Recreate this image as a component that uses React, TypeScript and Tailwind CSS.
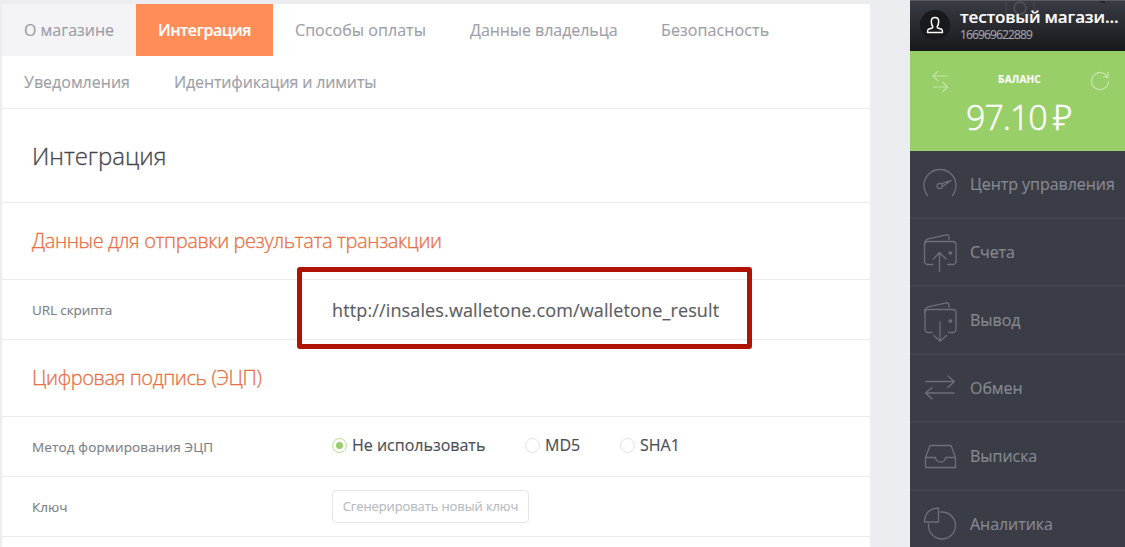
import type { ReactNode } from "react";

const MenuIcon = ({ children }: { children: ReactNode }) => (
  <svg width="40" height="44" viewBox="0 0 40 44" fill="none" stroke="#6c6f78" strokeWidth="1.3" strokeLinecap="round" strokeLinejoin="round" className="shrink-0">
    {children}
  </svg>
);

const walletBody = (
  <>
    <path d="M4.5 14.5C4.5 10.500 6 9.500 8 8.800L26.500 4.800Q28.800 4.400 29 7V9.300" />
    <circle cx="30.300" cy="23" r="1.400" fill="#6c6f78" strokeWidth="1" />
  </>
);

const menu = [
  {
    label: "Центр управления",
    icon: (
      <MenuIcon>
        <path d="M7.500 33.500A16 16 0 1 1 32.500 33.500" />
        <circle cx="19.800" cy="24" r="2.700" />
        <path d="M21.300 21.700L31 18.500L22.500 24.500" />
      </MenuIcon>
    ),
  },
  {
    label: "Счета",
    icon: (
      <MenuIcon>
        {walletBody}
        <path d="M13 34.500H8Q4.500 34.500 4.500 31V14.500Q4.500 11.500 8 11.500H32.500Q36 11.500 36 15V31Q36 34.500 32.500 34.500H27.500M19.500 41.500V22.500M13.500 29L19.500 22.500L26 29" />
      </MenuIcon>
    ),
  },
  {
    label: "Вывод",
    icon: (
      <MenuIcon>
        {walletBody}
        <path d="M12 34.500H8.500Q5 34.500 5 31V14.500Q5 11.500 8.500 11.500H32.500Q36 11.500 36 15V31Q36 34.500 32.500 34.500H28.500M20 24V43M14 37.500L20 43.300L26.500 37.500" />
      </MenuIcon>
    ),
  },
  {
    label: "Обмен",
    icon: (
      <MenuIcon>
        <path d="M6 15.500H34M28 10L34.300 15.500L28 21.500M34 27H5.500M12 21.500L5.500 27L12 33" />
      </MenuIcon>
    ),
  },
  {
    label: "Выписка",
    icon: (
      <MenuIcon>
        <path d="M5.500 33.500V23.500L10 11.500H31L35.500 23.500V33.500ZM5.500 23.500H15.500Q16 28 20.500 28T25.500 23.500H35.500" />
      </MenuIcon>
    ),
  },
  {
    label: "Аналитика",
    icon: (
      <MenuIcon>
        <path d="M18.500 6V20H4.500C4.500 11.500 10 6 18.500 6ZM20.500 10H22A13.500 13.500 0 1 1 8.500 23.500V22" />
      </MenuIcon>
    ),
  },
];

const tabRows = [
  [
    { label: "О магазине", style: "w-[134px] bg-[#f4f4f6] text-[#9b9da6]" },
    { label: "Интеграция", style: "w-[137px] bg-[#ff8d58] font-semibold tracking-[-0.45px] text-white" },
    { label: "Способы оплаты", style: "w-[175px] text-[#9ea0a9] tracking-[0.05px]" },
    { label: "Данные владельца", style: "w-[191px] text-[#9ea0a9] tracking-[-0.06px]" },
    { label: "Безопасность", style: "w-[153px] text-[#9ea0a9] tracking-[0.1px]" },
  ],
  [
    { label: "Уведомления", style: "w-[150px] text-[#9ea0a9]" },
    { label: "Идентификация и лимиты", style: "w-[247px] text-[#9ea0a9] tracking-[-0.14px]" },
  ],
];

function Radio({ label, checked, className }: { label: string; checked?: boolean; className: string }) {
  return (
    <label className={`flex items-center gap-[5px] ${className}`}>
      <span className={`flex size-[15px] items-center justify-center rounded-full border ${checked ? "border-[#b5dc93]" : "border-[#e2e2e5]"}`}>
        {checked && <span className="size-[7px] rounded-full bg-[#97ce67]" />}
      </span>
      <span>{label}</span>
    </label>
  );
}

function Row({ label, tracking = "", children }: { label: string; tracking?: string; children: ReactNode }) {
  return (
    <div className="flex h-[60px] items-center border-b border-[#ececee] pl-[30px]">
      <div className={`w-[300px] shrink-0 pt-[2px] text-[13.5px] text-[#7c7f88] ${tracking}`}>{label}</div>
      {children}
    </div>
  );
}

function Section({ children }: { children: ReactNode }) {
  return (
    <h2 className="flex h-[77px] items-center border-b border-[#ececee] pl-[30px] text-[20px] font-light tracking-[-0.38px] text-[#e86f43] [-webkit-text-stroke:0.3px]">
      {children}
    </h2>
  );
}

export default function App() {
  return (
    <div className="flex h-[547px] w-[1125px] overflow-hidden bg-[#ecedf1] font-['Open_Sans','Noto_Sans',sans-serif] whitespace-nowrap [-webkit-text-stroke:0.15px]">
      <main className="mt-1 ml-[2px] w-[868px] bg-white">
        <nav className="h-[105px] border-b border-[#ececee] text-[16px]">
          {tabRows.map((row, i) => (
            <div key={i} className="flex">
              {row.map((tab) => (
                <a key={tab.label} className={`flex h-[52px] items-center pl-[22px] ${tab.style}`}>{tab.label}</a>
              ))}
            </div>
          ))}
        </nav>
        <h1 className="flex h-[94px] items-center border-b border-[#ececee] pl-[30px] text-[24px] font-light text-[#44464f] [-webkit-text-stroke:0.3px]">Интеграция</h1>
        <Section>Данные для отправки результата транзакции</Section>
        <Row label="URL скрипта" tracking="tracking-[-0.1px]">
          <div className="relative pt-[2px] text-[18px] tracking-[0.13px] text-[#5c5d64]">
            http://insales.walletone.com/walletone_result
            <span className="absolute top-1/2 -left-[35px] h-[82px] w-[455px] -translate-y-[43px] rounded-[3px] border-5 border-[#b01204]" />
          </div>
        </Row>
        <Section>Цифровая подпись (ЭЦП)</Section>
        <Row label="Метод формирования ЭЦП" tracking="tracking-[0.15px]">
          <div className="flex pb-[3px] text-[16px] text-[#4c4e56]">
            <Radio label="Не использовать" checked className="w-[193px]" />
            <Radio label="MD5" className="w-[95px]" />
            <Radio label="SHA1" className="w-[95px]" />
          </div>
        </Row>
        <Row label="Ключ">
          <button className="h-[33px] w-[197px] rounded-[4px] border border-[#e4e5e8] text-[13px] tracking-[-0.12px] text-[#b8bac1]">Сгенерировать новый ключ</button>
        </Row>
      </main>

      <aside className="ml-10 w-[215px] bg-[#3b3d46]">
        <header className="relative flex h-[51px] overflow-hidden border-t border-[#5a5c64] bg-linear-to-b from-[#3a3c44] to-[#18191c] pt-[9px] pl-[10px]">
          <svg width="100" height="17" viewBox="0 0 100 17" fill="none" className="absolute top-0 left-[95px]">
            <path d="M1 0V14H29V0" stroke="#484a52" />
            <circle cx="15" cy="7" r="6" stroke="#50525a" strokeWidth="1.5" />
            <path d="M94 0Q100 5 106 0Z" fill="#25262b" />
          </svg>
          <span className="relative flex size-[30px] shrink-0 items-center justify-center rounded-full bg-[#18191d]">
            <svg width="18" height="18" viewBox="0 0 18 18" fill="none" stroke="#fff" strokeWidth="1.500" strokeLinejoin="round">
              <path d="M6.800 10.500C5.500 9 5.300 7 5.300 5.200Q5.500 1.500 9 1.500T12.700 5.200C12.700 7 12.500 9 11.200 10.500Q11 12 12.500 12.300L15.500 13.200Q16.500 13.700 16.500 16.500H1.500Q1.500 13.700 2.500 13.200L5.500 12.300Q7 12 6.800 10.500Z" />
            </svg>
          </span>
          <div className="relative ml-[10px] -mt-[4px]">
            <div className="text-[17px] leading-[22px] font-semibold tracking-[-0.15px] text-white">тестовый магази...</div>
            <div className="text-[12px] leading-[14px] tracking-[-0.85px] text-[#a1a2a6]">166969622889</div>
          </div>
        </header>
        <section className="h-[100px] bg-[#98cf68] pt-5 text-white">
          <div className="flex items-start justify-between pr-[15px] pl-[22px]">
            <svg width="17" height="22" viewBox="0 0 17 22" fill="none" stroke="#c3e3a7" strokeWidth="1.200">
              <path d="M16 5H1.500M6 0L1 5L6 10M1 16H15M10.500 11L15.500 16L10.500 21" />
            </svg>
            <div className="text-[10px] leading-4 font-bold tracking-[0.2px]">БАЛАНС</div>
            <svg width="20" height="20" viewBox="0 0 20 20" fill="none" stroke="#c3e3a7" strokeWidth="1.300">
              <path d="M17.500 6A8.500 8.500 0 1 0 18.500 10M18 1V6H13" />
            </svg>
          </div>
          <div className="flex pt-1 pl-[56px] text-[34px] leading-10 font-light tracking-[-1px] [-webkit-text-stroke:0.5px]">
            <span className="w-[87px]">97.10</span>
            <span>₽</span>
          </div>
        </section>
        <nav>
          {menu.map((item) => (
            <a key={item.label} className="flex h-[68px] items-center border-b-2 border-[#42454e] pl-[10px] text-[16px] tracking-[-0.05px] text-[#868993]">
              {item.icon}
              <span className="ml-[10px]">{item.label}</span>
            </a>
          ))}
        </nav>
      </aside>
    </div>
  );
}
